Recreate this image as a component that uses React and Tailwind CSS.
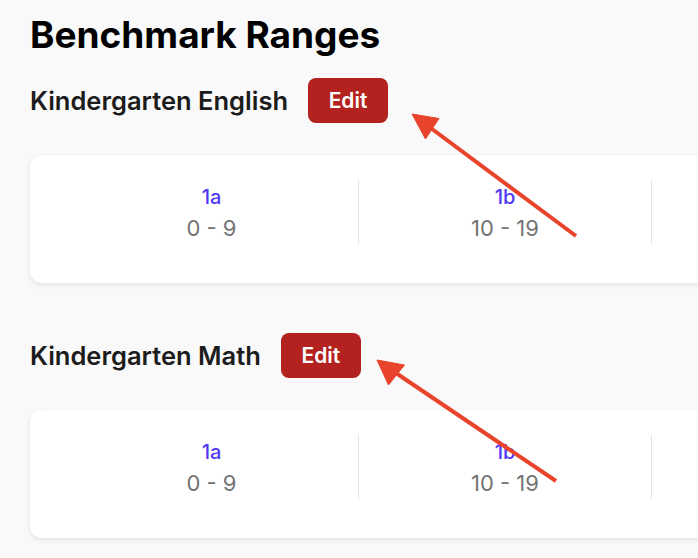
import React from 'react';

const sections = [
  {
    name: 'Kindergarten English',
    ranges: [
      { label: '1a', min: 0, max: 9 },
      { label: '1b', min: 10, max: 19 },
      { label: '1c', min: 20, max: 29 },
      { label: '2a', min: 30, max: 39 },
    ],
  },
  {
    name: 'Kindergarten Math',
    ranges: [
      { label: '1a', min: 0, max: 9 },
      { label: '1b', min: 10, max: 19 },
      { label: '1c', min: 20, max: 29 },
      { label: '2a', min: 30, max: 39 },
    ],
  },
];

function RangeCard({ ranges }) {
  return (
    <div className="mt-8 flex w-[668px] overflow-hidden rounded-l-xl bg-white pl-[35px] pt-[25px] pb-[39px] shadow-[0_2px_5px_rgba(0,0,0,0.09)]">
      {ranges.map((r, i) => (
        <div
          key={r.label}
          className={`flex h-16 w-[293px] shrink-0 flex-col items-center pt-[3px] ${i > 0 ? 'border-l border-[#e2e2e2]' : ''}`}
        >
          <span className="text-xl leading-7 font-medium text-[#4f39f6]">{r.label}</span>
          <span className="mt-px text-[22px] leading-8 text-[#737373]">
            {r.min} - {r.max}
          </span>
        </div>
      ))}
    </div>
  );
}

function Section({ section, first }) {
  return (
    <div className={first ? 'mt-[23px]' : 'mt-[50px]'}>
      <div className="flex h-[45px] items-center gap-5">
        <h2 className="text-[25.5px] leading-8 font-semibold text-[#1c1c1c]">{section.name}</h2>
        <button className="h-[45px] w-20 rounded-lg bg-[#b3221e] text-[21px] leading-7 font-semibold text-white">
          Edit
        </button>
      </div>
      <RangeCard ranges={section.ranges} />
    </div>
  );
}

function Arrows() {
  // annotation arrows drawn over the screenshot
  return (
    <svg className="pointer-events-none absolute inset-0" width="698" height="558" viewBox="0 0 698 558">
      <g fill="#e8432b" stroke="#e8432b">
        <line x1="576" y1="236" x2="424" y2="123" strokeWidth="4" />
        <polygon points="412,114 439,118.5 425.5,139" strokeWidth="1" strokeLinejoin="round" />
        <line x1="556" y1="481" x2="390" y2="369" strokeWidth="4" />
        <polygon points="377,360 404.5,365 388.5,385" strokeWidth="1" strokeLinejoin="round" />
      </g>
    </svg>
  );
}

export default function App() {
  return (
    <div className="relative h-[558px] w-full overflow-hidden bg-[#f9f9f9] font-['Inter',sans-serif]">
      <div className="pl-[30px] pt-[15px]">
        <h1 className="text-[37px] leading-10 font-bold text-black">Benchmark Ranges</h1>
        {sections.map((s, i) => (
          <Section key={s.name} section={s} first={i === 0} />
        ))}
      </div>
      <Arrows />
    </div>
  );
}
